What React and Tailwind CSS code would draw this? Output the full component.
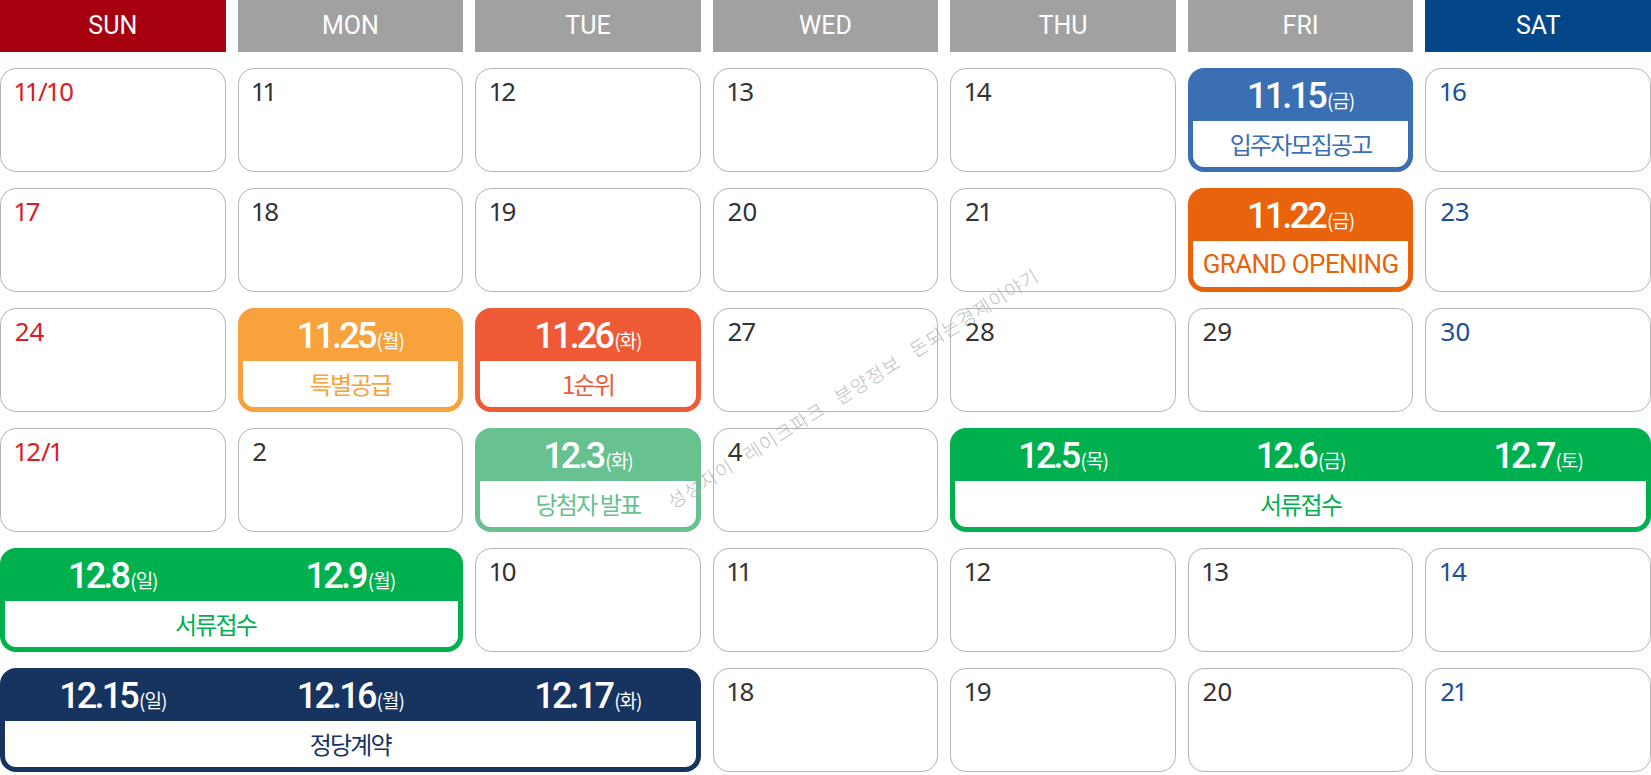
import React from 'react';

const HEADS = [
  { d: 'SUN', bg: 'bg-[#a6000f]' },
  { d: 'MON', bg: 'bg-[#a1a1a1]' },
  { d: 'TUE', bg: 'bg-[#a1a1a1]' },
  { d: 'WED', bg: 'bg-[#a1a1a1]' },
  { d: 'THU', bg: 'bg-[#a1a1a1]' },
  { d: 'FRI', bg: 'bg-[#a1a1a1]' },
  { d: 'SAT', bg: 'bg-[#034789]' },
];

const SUN = 'text-[#d61f29]';
const SAT = 'text-[#1b4f96]';

export default function App() {
  return (
    <div className="relative w-[1651px] overflow-hidden bg-white font-['Roboto','Noto_Sans_CJK_KR',sans-serif]">
      <div className="grid grid-cols-7 gap-x-[12px] gap-y-[16px]">
        {HEADS.map((h) => (
          <div key={h.d} className={cn('flex h-[52px] items-center justify-center text-[25px] text-white', h.bg)}>
            {h.d}
          </div>
        ))}

        {/* week 1 */}
        <Day n="11/10" tone={SUN} />
        <Day n="11" />
        <Day n="12" />
        <Day n="13" />
        <Day n="14" />
        <Event bg="bg-[#3a6fb4]" text="text-[#3a6fb4]" dates={[['11.15', '금']]} label="입주자모집공고" />
        <Day n="16" tone={SAT} />

        {/* week 2 */}
        <Day n="17" tone={SUN} />
        <Day n="18" />
        <Day n="19" />
        <Day n="20" />
        <Day n="21" />
        <Event
          bg="bg-[#e9630c]"
          text="text-[#e9630c]"
          dates={[['11.22', '금']]}
          label="GRAND OPENING"
          labelSize="text-[26px] tracking-[-0.6px]"
        />
        <Day n="23" tone={SAT} />

        {/* week 3 */}
        <Day n="24" tone={SUN} />
        <Event bg="bg-[#f7a23c]" text="text-[#f7a23c]" dates={[['11.25', '월']]} label="특별공급" />
        <Event bg="bg-[#ef5a36]" text="text-[#ef5a36]" dates={[['11.26', '화']]} label="1순위" />
        <Day n="27" />
        <Day n="28" />
        <Day n="29" />
        <Day n="30" tone={SAT} />

        {/* week 4 */}
        <Day n="12/1" tone={SUN} />
        <Day n="2" />
        <Event bg="bg-[#67c290]" text="text-[#67c290]" dates={[['12.3', '화']]} label="당첨자 발표" />
        <Day n="4" />
        <Event
          span="col-span-3"
          cols="grid-cols-3"
          bg="bg-[#00b04f]"
          text="text-[#00b04f]"
          dates={[['12.5', '목'], ['12.6', '금'], ['12.7', '토']]}
          label="서류접수"
        />

        {/* week 5 */}
        <Event
          span="col-span-2"
          cols="grid-cols-2"
          bg="bg-[#00b04f]"
          text="text-[#00b04f]"
          dates={[['12.8', '일'], ['12.9', '월']]}
          label="서류접수"
          labelPad="pr-[32px]"
        />
        <Day n="10" />
        <Day n="11" />
        <Day n="12" />
        <Day n="13" />
        <Day n="14" tone={SAT} />

        {/* week 6 */}
        <Event
          span="col-span-3"
          cols="grid-cols-3"
          bg="bg-[#16345f]"
          text="text-[#16345f]"
          dates={[['12.15', '일'], ['12.16', '월'], ['12.17', '화']]}
          label="정당계약"
        />
        <Day n="18" />
        <Day n="19" />
        <Day n="20" />
        <Day n="21" tone={SAT} />
      </div>

      {/* watermark */}
      <div className="pointer-events-none absolute left-[853px] top-[388px] -translate-x-1/2 -translate-y-1/2 -rotate-[32deg] whitespace-nowrap font-['Noto_Sans_CJK_KR',sans-serif] text-[19px] font-light tracking-[1px] text-[#acacac]/80 [word-spacing:10px]">
        성성자이 레이크파크 분양정보 돈되는경제이야기
      </div>
    </div>
  );
}

function Day({ n, tone = 'text-[#333333]' }) {
  return (
    <div className={cn("h-[104px] rounded-2xl border-[1.5px] border-[#b5b5b5] bg-white pl-[14px] pt-[9px] font-['Noto_Sans',sans-serif] text-[26px] leading-none proportional-nums", tone)}>
      {n}
    </div>
  );
}

function Event({ bg, text, dates, label, span, cols, labelPad, labelSize = "font-['Noto_Sans_CJK_KR',sans-serif] text-[24px] tracking-[-1.8px]" }) {
  return (
    <div className={cn('flex h-[104px] flex-col rounded-2xl pb-[5px]', bg, span)}>
      <div className={cn('grid h-[53px] shrink-0 items-center gap-x-[12px] pt-[2px] text-white', cols || 'grid-cols-1')}>
        {dates.map(([d, w]) => (
          <div key={d} className="flex items-baseline justify-center">
            <span className="text-[36px] font-medium leading-none tracking-[-2.8px]">{d}</span>
            <span className="ml-[2px] font-['Noto_Sans_CJK_KR',sans-serif] text-[19px] leading-none tracking-[-1px]">({w})</span>
          </div>
        ))}
      </div>
      <div className={cn('mx-[5px] flex flex-1 items-center justify-center rounded-b-[11px] bg-white leading-none', labelPad)}>
        <span className={cn(labelSize, text)}>{label}</span>
      </div>
    </div>
  );
}

function cn(...inputs) {
  return inputs.filter(Boolean).join(' ');
}
